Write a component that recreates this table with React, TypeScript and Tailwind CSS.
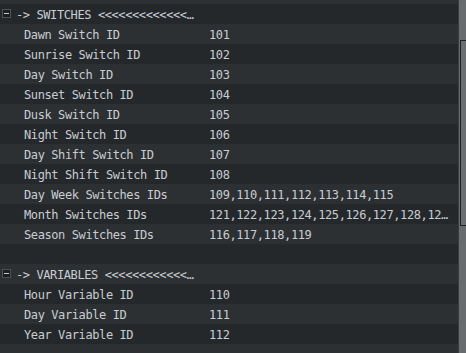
import React from "react";

type Row =
  | { kind: "header"; text: string }
  | { kind: "item"; label: string; value: string }
  | { kind: "blank" };

const rows: Row[] = [
  { kind: "header", text: "-> SWITCHES <<<<<<<<<<<<<<<<<<<<<<<<<<<<" },
  { kind: "item", label: "Dawn Switch ID", value: "101" },
  { kind: "item", label: "Sunrise Switch ID", value: "102" },
  { kind: "item", label: "Day Switch ID", value: "103" },
  { kind: "item", label: "Sunset Switch ID", value: "104" },
  { kind: "item", label: "Dusk Switch ID", value: "105" },
  { kind: "item", label: "Night Switch ID", value: "106" },
  { kind: "item", label: "Day Shift Switch ID", value: "107" },
  { kind: "item", label: "Night Shift Switch ID", value: "108" },
  { kind: "item", label: "Day Week Switches IDs", value: "109,110,111,112,113,114,115" },
  { kind: "item", label: "Month Switches IDs", value: "121,122,123,124,125,126,127,128,129,130,131,132" },
  { kind: "item", label: "Season Switches IDs", value: "116,117,118,119" },
  { kind: "blank" },
  { kind: "header", text: "-> VARIABLES <<<<<<<<<<<<<<<<<<<<<<<<<<<<" },
  { kind: "item", label: "Hour Variable ID", value: "110" },
  { kind: "item", label: "Day Variable ID", value: "111" },
  { kind: "item", label: "Year Variable ID", value: "112" },
  { kind: "blank" },
];

function MinusBox() {
  return (
    <div className="ml-[2px] mr-[5px] mt-[4px] flex h-[9px] w-[9px] shrink-0 items-center justify-center border border-[#4d5154] bg-[#1c1e20]">
      <div className="h-[1px] w-[5px] bg-[#c4c8cc]" />
    </div>
  );
}

export default function App() {
  return (
    <div
      className="flex h-[353px] w-[466px] overflow-hidden bg-[#25282b] text-[12px] tracking-[-0.4px] text-[#c8cdd2]"
      style={{ fontFamily: '"DejaVu Sans Mono", monospace' }}
    >
      <div className="flex min-w-0 flex-1 flex-col">
        <div className="h-[4px] shrink-0 bg-[#2d3033]" />
        {rows.map((r, i) => {
          const bg = i % 2 === 0 ? "bg-[#25282b]" : "bg-[#2d3033]";
          if (r.kind === "header") {
            return (
              <div key={i} className={`flex h-[20px] shrink-0 items-start overflow-hidden pt-[1px] ${bg}`}>
                <MinusBox />
                <div className="w-[178px] overflow-hidden text-ellipsis whitespace-nowrap leading-[20px]">
                  {r.text}
                </div>
              </div>
            );
          }
          if (r.kind === "blank") {
            return <div key={i} className={`h-[20px] shrink-0 ${bg}`} />;
          }
          return (
            <div key={i} className={`flex h-[20px] shrink-0 items-start overflow-hidden pt-[1px] leading-[20px] ${bg}`}>
              <div className="w-[209px] shrink-0 overflow-hidden whitespace-nowrap pl-[24px]">
                {r.label}
              </div>
              <div className="min-w-0 flex-1 overflow-hidden text-ellipsis whitespace-nowrap pr-[6px]">
                {r.value}
              </div>
            </div>
          );
        })}
      </div>
      <div className="flex w-[8px] shrink-0 flex-col border-l border-[#3a3d40] bg-[#686c6f]">
        <div className="mt-[40px] ml-[1px] h-[186px] border-l border-t border-b border-[#1f2123] bg-[#6b6f72]" />
      </div>
    </div>
  );
}
